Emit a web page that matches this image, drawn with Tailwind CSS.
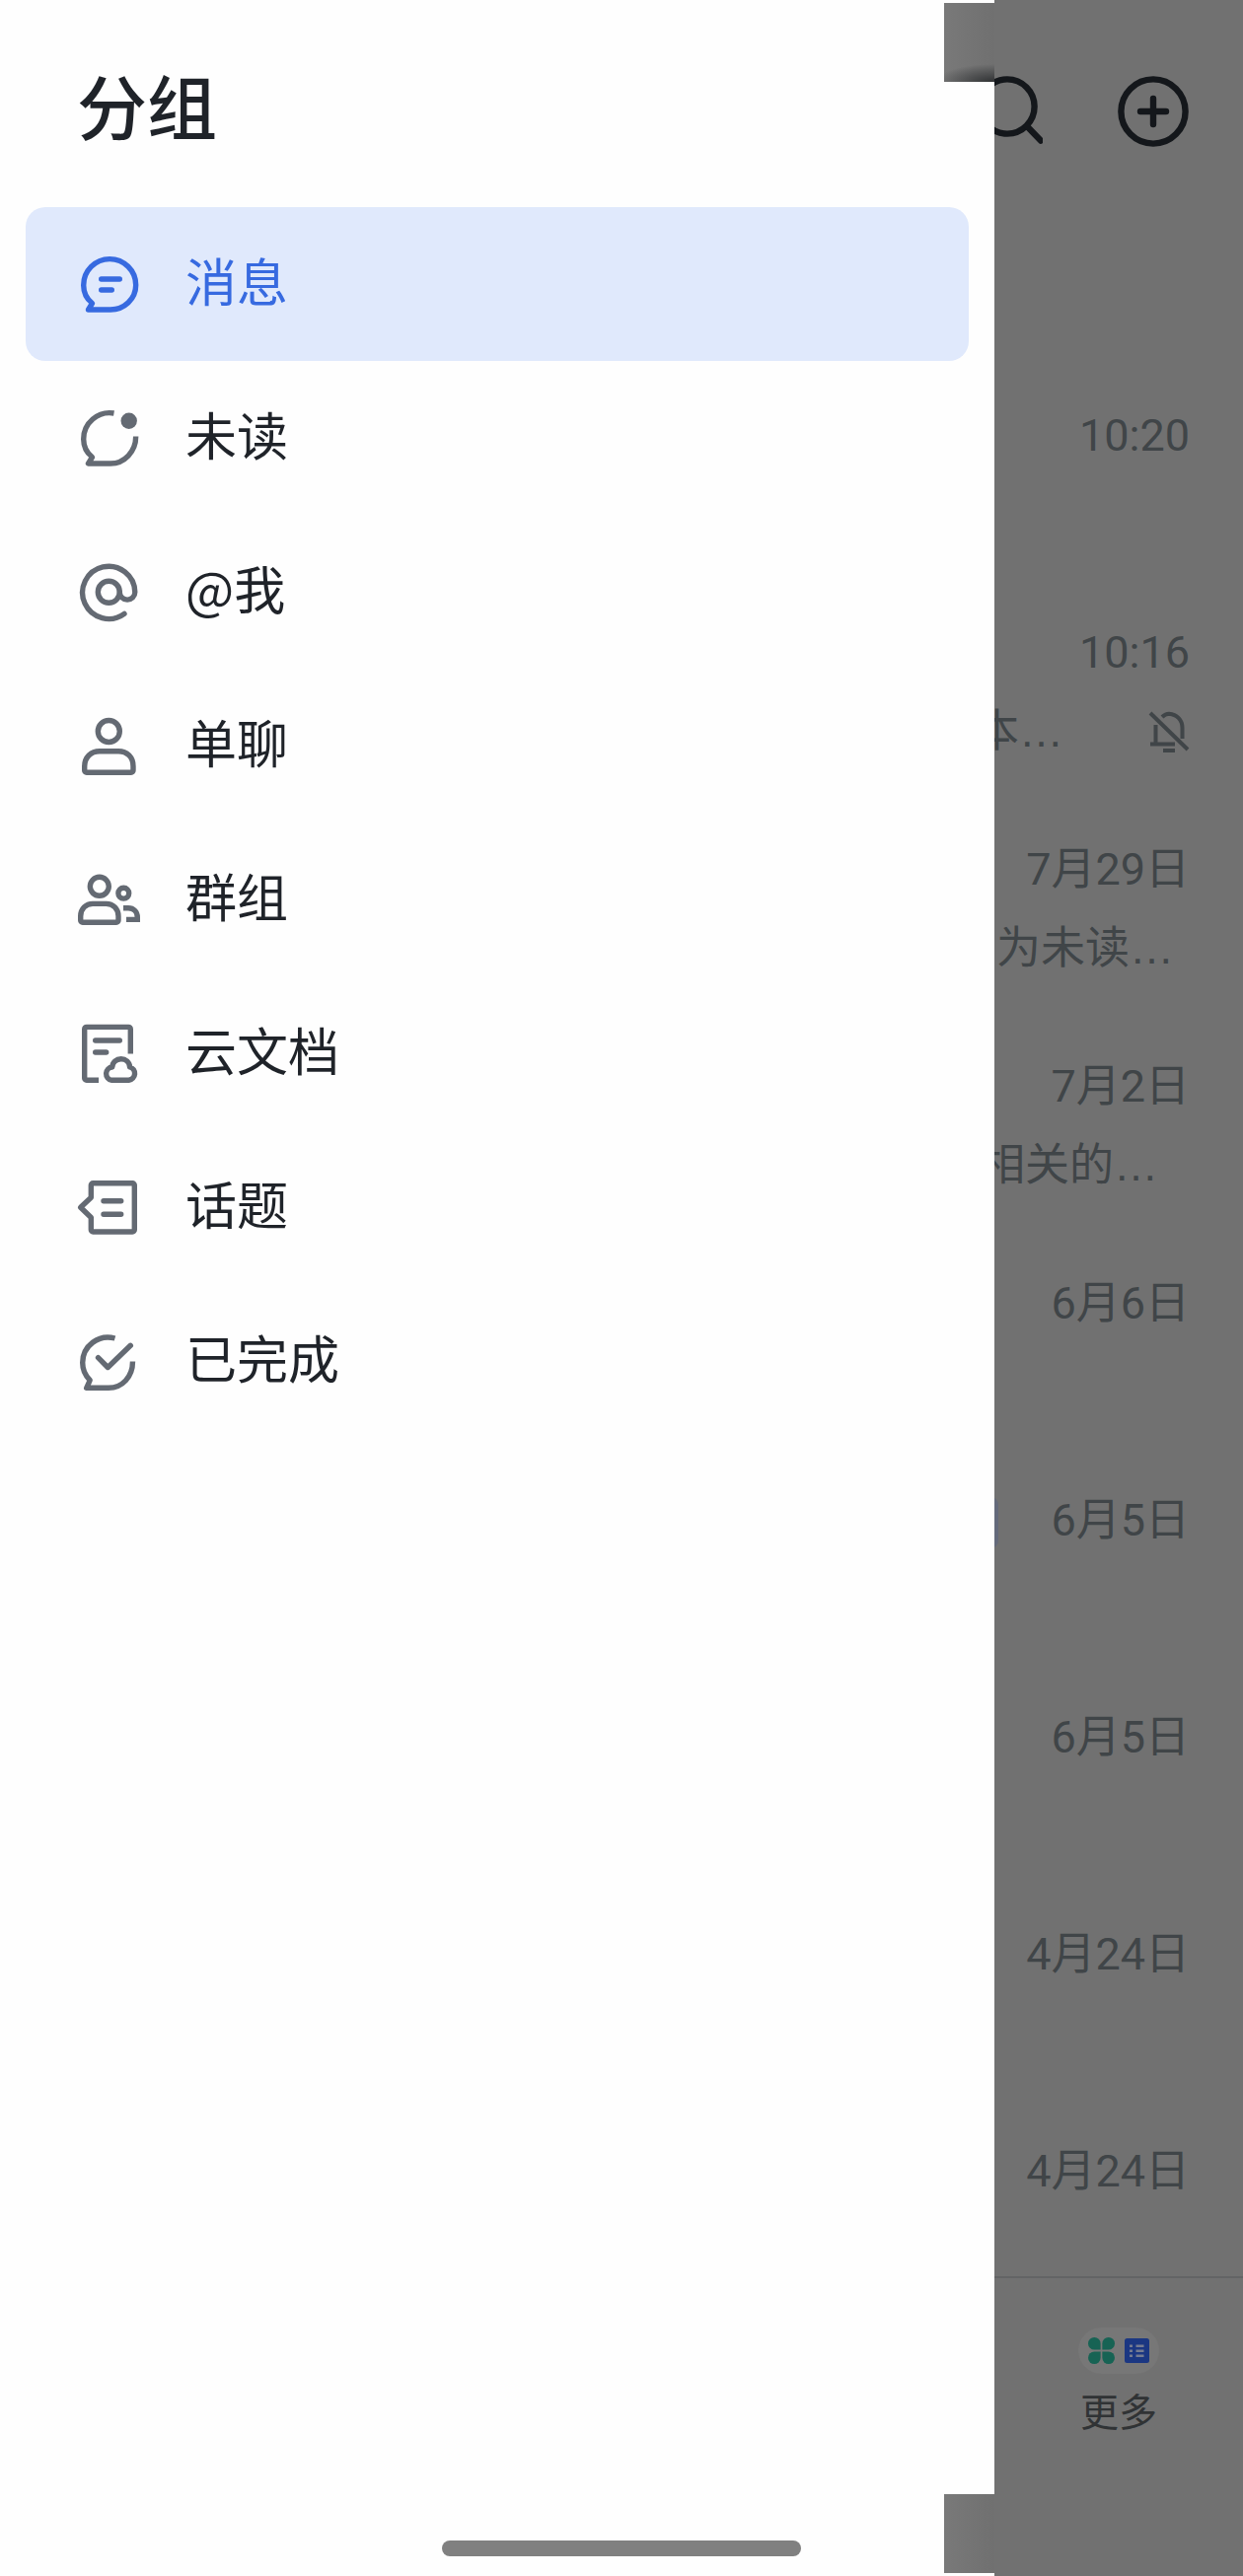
<!DOCTYPE html>
<html lang="zh-CN">

<head>
    <title>分组</title>
    <meta charset="UTF-8">
    <meta name="viewport" content="width=device-width, initial-scale=1">
    <script src="https://cdn.jsdelivr.net/npm/@tailwindcss/browser@4"></script>
</head>

<body class="relative min-h-screen overflow-x-hidden bg-[#717171] font-['Noto_Sans_CJK_SC',sans-serif]">

    <!-- chat list behind the drawer -->
    <div class="flex min-h-screen flex-col">
        <header class="flex h-[226px] items-center justify-end gap-[76px] pr-[55px] text-[#14171b]">
            <button type="button" aria-label="搜索">
                <svg class="size-[72px]" viewBox="0 0 72 72" fill="none" stroke="currentColor" stroke-width="6.4" stroke-linecap="round">
                    <circle cx="36" cy="31" r="27.6" />
                    <path d="M56 51L70 65.5" />
                </svg>
            </button>
            <button type="button" aria-label="新建">
                <svg class="size-[72px]" viewBox="0 0 72 72" fill="none" stroke="currentColor" stroke-width="6.4" stroke-linecap="round">
                    <circle cx="36" cy="36" r="32.6" />
                    <path d="M36 23V49M23 36H49" />
                </svg>
            </button>
        </header>

        <main class="grow pt-[102px]">
            <ul class="text-right font-[Roboto,'Noto_Sans_CJK_SC',sans-serif] text-[45px] leading-[48px] text-[#404548]">
                <li class="h-[220px] pt-[90px] pr-[54px]">
                    <time>10:20</time>
                </li>
                <li class="h-[220px] pt-[90px] pr-[54px]">
                    <time>10:16</time>
                    <div class="mt-8 flex items-center justify-end gap-[86px]">
                        <p>本<span class="font-['Liberation_Sans',sans-serif]">…</span></p>
                        <svg class="size-[42px]" viewBox="0 0 42 42" fill="none" stroke="currentColor" stroke-width="4">
                            <path d="M2 2L40 39" />
                            <path d="M7.5 14V32.5M2 33.5H27M15 40H27M14 6C17 3 20 2.8 21 2.8C29 3.5 34.5 9 34.5 17V28" />
                        </svg>
                    </div>
                </li>
                <li class="h-[220px] pt-[90px] pr-[54px]">
                    <time>7月29日</time>
                    <p class="mt-8 pr-4">为未读<span class="font-['Liberation_Sans',sans-serif]">…</span></p>
                </li>
                <li class="h-[220px] pt-[90px] pr-[54px]">
                    <time>7月2日</time>
                    <p class="mt-8 pr-8">相关的<span class="font-['Liberation_Sans',sans-serif]">…</span></p>
                </li>
                <li class="h-[220px] pt-[90px] pr-[54px]">
                    <time>6月6日</time>
                </li>
                <li class="flex h-[220px] items-start justify-end gap-[53px] pt-[90px] pr-[54px]">
                    <span class="h-[52px] w-20 rounded-lg bg-[#646a7b]"></span>
                    <time>6月5日</time>
                </li>
                <li class="h-[220px] pt-[90px] pr-[54px]">
                    <time>6月5日</time>
                </li>
                <li class="h-[220px] pt-[90px] pr-[54px]">
                    <time>4月24日</time>
                </li>
                <li class="h-[220px] pt-[90px] pr-[54px]">
                    <time>4月24日</time>
                </li>
            </ul>
        </main>

        <footer class="flex h-[304px] justify-end border-t-2 border-[#636465]">
            <button type="button" class="flex w-1/5 flex-col items-center gap-3 pt-[50px] text-[39px] leading-[48px] text-[#303335]">
                <span class="flex h-[47px] w-[82px] items-center justify-center gap-[10px] rounded-full bg-[#777777]">
                    <svg class="size-[27px] text-[#176354]" viewBox="0 0 27 27" fill="currentColor">
                        <path d="M6.3 0A6.3 6.3 0 0 1 12.6 6.3V12.6H6.3A6.3 6.3 0 0 1 6.3 0Z" />
                        <path d="M20.7 0A6.3 6.3 0 0 1 20.7 12.6H14.4V6.3A6.3 6.3 0 0 1 20.7 0Z" />
                        <path d="M6.3 14.4H12.6V20.7A6.3 6.3 0 1 1 6.3 14.4Z" />
                        <path d="M14.4 14.4H20.7A6.3 6.3 0 1 1 14.4 20.7Z" />
                    </svg>
                    <svg class="size-[25px]" viewBox="0 0 25 25">
                        <rect width="25" height="25" rx="2.5" fill="#1b3782" />
                        <path d="M5 7.7H8M5 12.7H8M5 17.7H8M11.5 7.7H19.5M11.5 12.7H19.5M11.5 17.7H19.5" stroke="#747b91" stroke-width="2.6" />
                    </svg>
                </span>
                更多
            </button>
        </footer>
    </div>

    <!-- drawer -->
    <aside class="absolute inset-y-0 left-0 w-4/5 bg-[#fefefe] text-[#1f2329]">
        <h1 class="flex h-[210px] items-center pl-[78px] text-[71px] font-medium">分组</h1>
        <nav class="flex flex-col px-[26px] text-[52px]">
            <button type="button" aria-current="page" class="flex h-[156px] items-center gap-[46px] rounded-[20px] bg-[#e0e9fc] pl-[52px] text-[#376ae0]">
                <svg class="size-16" viewBox="0 0 64 64" fill="none" stroke="currentColor" stroke-width="5.4" stroke-linecap="round" stroke-linejoin="round">
                    <path d="M34 58H11.5L15.5 51.5C9.8 47 6.7 40.5 6.7 33.2A26.5 26.5 0 0 1 59.7 33C59.7 47 48 58 34 58Z" />
                    <path d="M24.7 27H43.3M24.7 38H35.3" />
                </svg>
                <span class="pb-2">消息</span>
            </button>
            <button type="button" class="flex h-[156px] items-center gap-[46px] pl-[52px]">
                <svg class="size-16 text-[#646a73]" viewBox="0 0 64 64" fill="none" stroke="currentColor" stroke-width="5.4" stroke-linejoin="round">
                    <path d="M37.5 7A26.5 26.5 0 0 0 6.7 33.2C6.7 40.5 9.8 47 15.5 51.5L11.5 58H34C48 58 59.7 46 59.7 30.5" />
                    <circle cx="52.7" cy="14.7" r="8.2" fill="currentColor" stroke="none" />
                </svg>
                <span class="pb-2">未读</span>
            </button>
            <button type="button" class="flex h-[156px] items-center gap-[46px] pl-[52px]">
                <svg class="size-16 text-[#646a73]" viewBox="0 0 64 64" fill="none" stroke="currentColor" stroke-width="5.4" stroke-linecap="round">
                    <circle cx="32.3" cy="32.3" r="11" />
                    <path d="M48 54.3A26.6 26.6 0 1 1 58.8 32.4A7.7 7.7 0 0 1 43.3 32.4" />
                </svg>
                <span class="pb-2">@我</span>
            </button>
            <button type="button" class="flex h-[156px] items-center gap-[46px] pl-[52px]">
                <svg class="size-16 text-[#646a73]" viewBox="0 0 64 64" fill="none" stroke="currentColor" stroke-width="5.4">
                    <circle cx="32.3" cy="17.5" r="11" />
                    <path d="M7.7 53C7.7 44 14 37.7 23 37.7H42C51 37.7 57 44 57 53V57.3A2 2 0 0 1 55 59.3H9.7A2 2 0 0 1 7.7 57.3Z" />
                </svg>
                <span class="pb-2">单聊</span>
            </button>
            <button type="button" class="flex h-[156px] items-center gap-[46px] pl-[52px]">
                <svg class="size-16 text-[#646a73]" viewBox="0 0 64 64" fill="none" stroke="currentColor" stroke-width="5.4">
                    <circle cx="22.8" cy="18.8" r="9.5" />
                    <circle cx="47.3" cy="25.7" r="5.4" />
                    <path d="M3.7 49C3.7 41.5 9 36.4 16 36.4H29.7C36.7 36.4 42 41.5 42 49V53.3A2 2 0 0 1 40 55.3H5.7A2 2 0 0 1 3.7 53.3Z" />
                    <path d="M47 40.7H52C57.5 40.7 61.3 44.5 61.3 50V52.4H50" />
                </svg>
                <span class="pb-2">群组</span>
            </button>
            <button type="button" class="flex h-[156px] items-center gap-[46px] pl-[52px]">
                <svg class="size-16 text-[#646a73]" viewBox="0 0 64 64" fill="none" stroke="currentColor" stroke-width="5.4">
                    <path d="M22 59.3H9.7A2 2 0 0 1 7.7 57.3V7.4A2 2 0 0 1 9.7 5.4H52.3A2 2 0 0 1 54.3 7.4V32.5" />
                    <path d="M18.7 19H43.3M18.7 31H29.7" stroke-linecap="round" />
                    <path d="M35.3 59.3A6.7 6.7 0 0 1 35.8 46C36 41 40 37.7 44.7 37.7S53.3 41 53.6 46A6.8 6.8 0 0 1 52.6 59.3Z" stroke-linejoin="round" />
                </svg>
                <span class="pb-2">云文档</span>
            </button>
            <button type="button" class="flex h-[156px] items-center gap-[46px] pl-[52px]">
                <svg class="size-16 text-[#646a73]" viewBox="0 0 64 64" fill="none" stroke="currentColor" stroke-width="5.4" stroke-linecap="round" stroke-linejoin="round">
                    <path d="M14.3 9.7A2 2 0 0 1 16.3 7.7H56.3A2 2 0 0 1 58.3 9.7V55A2 2 0 0 1 56.3 57H16.3A2 2 0 0 1 14.3 55V42.5L3.7 32.3L14.3 22.2Z" />
                    <path d="M27 25.7H44.7M27 39.2H44.7" />
                </svg>
                <span class="pb-2">话题</span>
            </button>
            <button type="button" class="flex h-[156px] items-center gap-[46px] pl-[52px]">
                <svg class="size-16 text-[#646a73]" viewBox="0 0 64 64" fill="none" stroke="currentColor" stroke-width="5.4" stroke-linejoin="round">
                    <path d="M38.5 9A25.8 25.8 0 0 0 5.7 33.8C5.7 41 7.5 46 13.2 51.5L9.7 59.3H32C46 59.3 56.5 48 56.5 32.5" />
                    <path d="M21.5 28.7L31.3 38.5L54.3 16.3" stroke-linecap="round" />
                </svg>
                <span class="pb-2">已完成</span>
            </button>
        </nav>

        <!-- shadow at the drawer's two right corners -->
        <div class="absolute top-[3px] right-0 h-20 w-[51px] bg-linear-to-r from-[#797979] to-[#707070]">
            <div class="h-full bg-[radial-gradient(ellipse_60px_18px_at_100%_100%,#303234,transparent)]"></div>
        </div>
        <div class="absolute right-0 bottom-[3px] h-20 w-[51px] bg-linear-to-r from-[#797979] to-[#707070]"></div>
    </aside>

    <!-- gesture bar -->
    <div class="absolute bottom-5 left-1/2 h-4 w-[364px] -translate-x-1/2 rounded-full bg-[#808080]"></div>
</body>

</html>
